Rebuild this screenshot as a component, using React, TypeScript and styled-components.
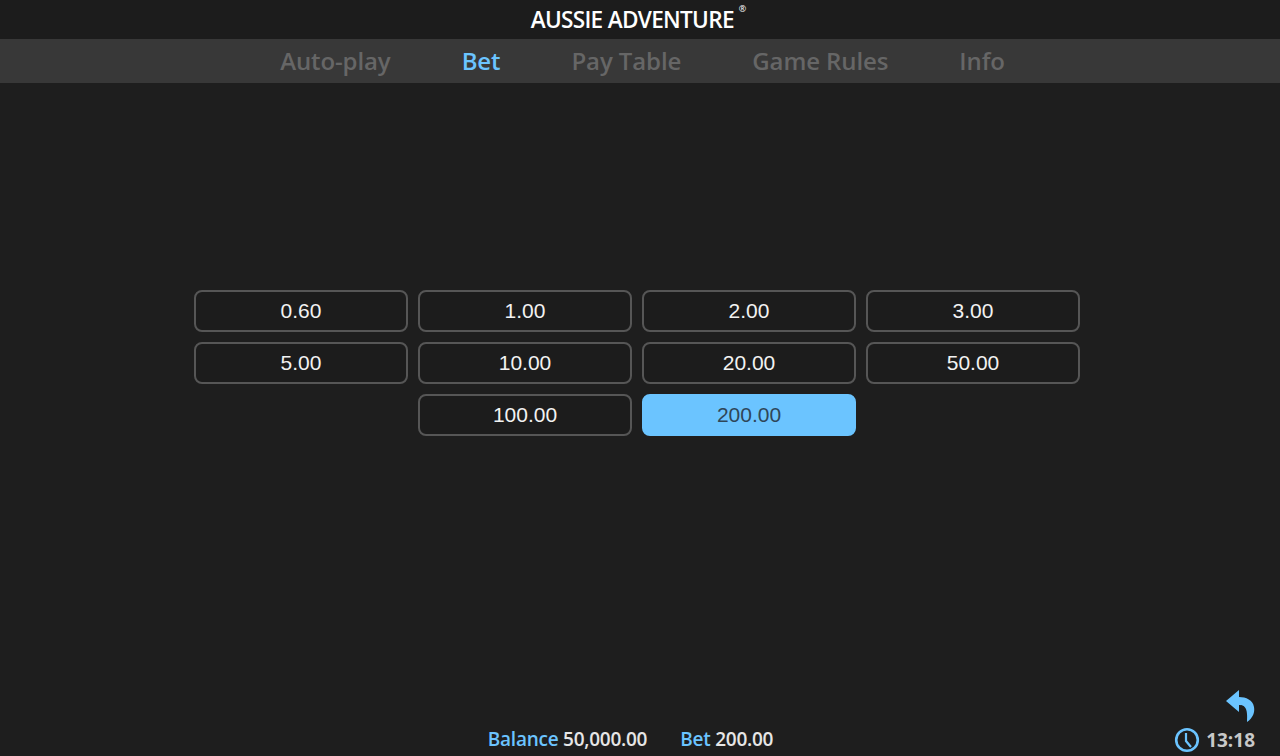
import styled, { createGlobalStyle } from 'styled-components'

const amounts = ['0.60', '1.00', '2.00', '3.00', '5.00', '10.00', '20.00', '50.00', '100.00', '200.00']
const tabs = ['Auto-play', 'Bet', 'Pay Table', 'Game Rules', 'Info']

const selectedTab = 'Bet'
const selectedAmount = '200.00'

const GlobalStyle = createGlobalStyle`
  html, body {
    margin: 0;
    padding: 0;
    background: #1e1e1e;
  }
`

const Page = styled.div`
  width: 1280px;
  height: 756px;
  display: flex;
  flex-direction: column;
  background: #1e1e1e;
  font-family: "Open Sans", "Noto Sans", sans-serif;
  overflow: hidden;
`

const Header = styled.header`
  height: 39px;
  flex: none;
  display: flex;
  justify-content: center;
  align-items: center;
  background: #1c1c1c;
`

const Title = styled.h1`
  margin: 0 3px 0 0;
  display: flex;
  color: #ffffff;
  font-size: 22.6px;
  font-weight: 600;
  letter-spacing: -0.7px;
  line-height: 39px;
`

const Registered = styled.span`
  margin: -11px 0 0 5px;
  font-size: 9px;
  font-weight: 400;
  letter-spacing: 0;
`

const Tabs = styled.nav`
  height: 44px;
  flex: none;
  display: flex;
  justify-content: center;
  align-items: center;
  gap: 71px;
  padding: 0 0 2px 5px;
  box-sizing: border-box;
  background: #383838;
`

const Tab = styled.div<{ $active: boolean }>`
  color: ${(p) => (p.$active ? '#6bc4ff' : '#666666')};
  font-size: 24px;
  font-weight: 600;
  letter-spacing: -0.1px;
`

const Main = styled.main`
  flex: 1;
  display: flex;
  justify-content: center;
  padding: 207px 6px 0 0;
`

const AmountGrid = styled.div`
  width: 886px;
  height: 145px;
  display: flex;
  flex-wrap: wrap;
  justify-content: center;
  align-content: flex-start;
  gap: 10px;
`

const Amount = styled.button<{ $selected: boolean }>`
  width: 214px;
  height: 42px;
  padding: 0;
  box-sizing: border-box;
  border: 2px solid ${(p) => (p.$selected ? '#6bc4ff' : '#565656')};
  border-radius: 8px;
  background: ${(p) => (p.$selected ? '#6bc4ff' : '#1c1c1c')};
  color: ${(p) => (p.$selected ? '#2f4658' : '#f2f2f2')};
  font-family: "Liberation Sans", Arial, sans-serif;
  font-size: 21px;
`

const Footer = styled.footer`
  position: relative;
  height: 33px;
  flex: none;
  display: flex;
  justify-content: center;
  align-items: center;
  gap: 33px;
  padding: 0 19px 2px 0;
  box-sizing: border-box;
  font-size: 19px;
  font-weight: 600;
  letter-spacing: -0.25px;
`

const Stat = styled.div`
  color: #e6e6e6;
  white-space: nowrap;
`

const StatLabel = styled.span`
  color: #6bc4ff;
`

const Corner = styled.div`
  position: absolute;
  right: 25px;
  bottom: 3px;
  display: flex;
  flex-direction: column;
  align-items: flex-end;
  gap: 4px;
`

const Clock = styled.div`
  display: flex;
  align-items: center;
  gap: 6px;
  color: #c8c8c8;
  font-size: 19px;
  font-weight: 700;
  letter-spacing: 0;
`

const BackIcon = () => (
  <svg width="30" height="34" viewBox="0 0 30 34">
    <path
      d="M14 1 L1 12 L14 23 L14 16 C20 16 23 19 22 33 C28 29 30 23 29 18 C28 11 21 8 14 8 Z"
      fill="#6bc4ff"
    />
  </svg>
)

const ClockIcon = () => (
  <svg width="26" height="26" viewBox="0 0 26 26" fill="none" stroke="#6bc4ff">
    <circle cx="13" cy="13" r="10.8" strokeWidth="2.6" />
    <path d="M12 6 L12 14 L17 20" strokeWidth="2.2" />
  </svg>
)

export default function App() {
  return (
    <Page>
      <GlobalStyle />
      <Header>
        <Title>
          AUSSIE ADVENTURE<Registered>®</Registered>
        </Title>
      </Header>
      <Tabs>
        {tabs.map((tab) => (
          <Tab key={tab} $active={tab === selectedTab}>
            {tab}
          </Tab>
        ))}
      </Tabs>
      <Main>
        <AmountGrid>
          {amounts.map((amount) => (
            <Amount key={amount} $selected={amount === selectedAmount}>
              {amount}
            </Amount>
          ))}
        </AmountGrid>
      </Main>
      <Footer>
        <Stat>
          <StatLabel>Balance</StatLabel> 50,000.00
        </Stat>
        <Stat>
          <StatLabel>Bet</StatLabel> 200.00
        </Stat>
        <Corner>
          <BackIcon />
          <Clock>
            <ClockIcon />
            13:18
          </Clock>
        </Corner>
      </Footer>
    </Page>
  )
}
